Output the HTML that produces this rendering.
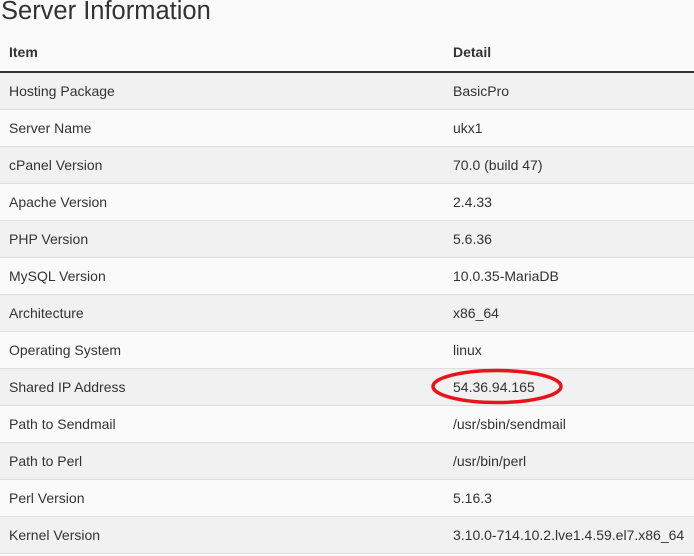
<!DOCTYPE html>
<html><head><style>
body{margin:0;width:694px;height:556px;background:#fafafa;font-family:"Liberation Sans",sans-serif;color:#333;overflow:hidden;position:relative}
h1{position:absolute;left:1px;top:-3px;margin:0;font-weight:normal;font-size:25.5px;color:#333}
.hd{position:absolute;top:34px;left:0;width:694px;height:37px;border-bottom:2px solid #333;font-weight:bold;font-size:14px}
.r{position:absolute;left:0;width:694px;height:36px;border-bottom:1px solid #ddd;font-size:14px}
.r.s{background:#f1f1f1}
.a{position:absolute;left:9px;top:10px}
.b{position:absolute;left:453px;top:10px}
.hd .a,.hd .b{top:10px}
</style></head><body>
<h1>Server Information</h1>
<div class="hd"><span class="a">Item</span><span class="b">Detail</span></div>
<div class="r s" style="top:73px"><span class="a">Hosting Package</span><span class="b">BasicPro</span></div>
<div class="r" style="top:110px"><span class="a">Server Name</span><span class="b">ukx1</span></div>
<div class="r s" style="top:147px"><span class="a">cPanel Version</span><span class="b">70.0 (build 47)</span></div>
<div class="r" style="top:184px"><span class="a">Apache Version</span><span class="b">2.4.33</span></div>
<div class="r s" style="top:221px"><span class="a">PHP Version</span><span class="b">5.6.36</span></div>
<div class="r" style="top:258px"><span class="a">MySQL Version</span><span class="b">10.0.35-MariaDB</span></div>
<div class="r s" style="top:295px"><span class="a">Architecture</span><span class="b">x86_64</span></div>
<div class="r" style="top:332px"><span class="a">Operating System</span><span class="b">linux</span></div>
<div class="r s" style="top:369px"><span class="a">Shared IP Address</span><span class="b">54.36.94.165</span></div>
<div class="r" style="top:406px"><span class="a">Path to Sendmail</span><span class="b">/usr/sbin/sendmail</span></div>
<div class="r s" style="top:443px"><span class="a">Path to Perl</span><span class="b">/usr/bin/perl</span></div>
<div class="r" style="top:480px"><span class="a">Perl Version</span><span class="b">5.16.3</span></div>
<div class="r s" style="top:517px"><span class="a">Kernel Version</span><span class="b">3.10.0-714.10.2.lve1.4.59.el7.x86_64</span></div>
<svg style="position:absolute;left:0;top:0" width="694" height="556"><ellipse cx="497" cy="386.5" rx="64" ry="16" fill="none" stroke="#e8141c" stroke-width="3.5"/></svg>
</body></html>
